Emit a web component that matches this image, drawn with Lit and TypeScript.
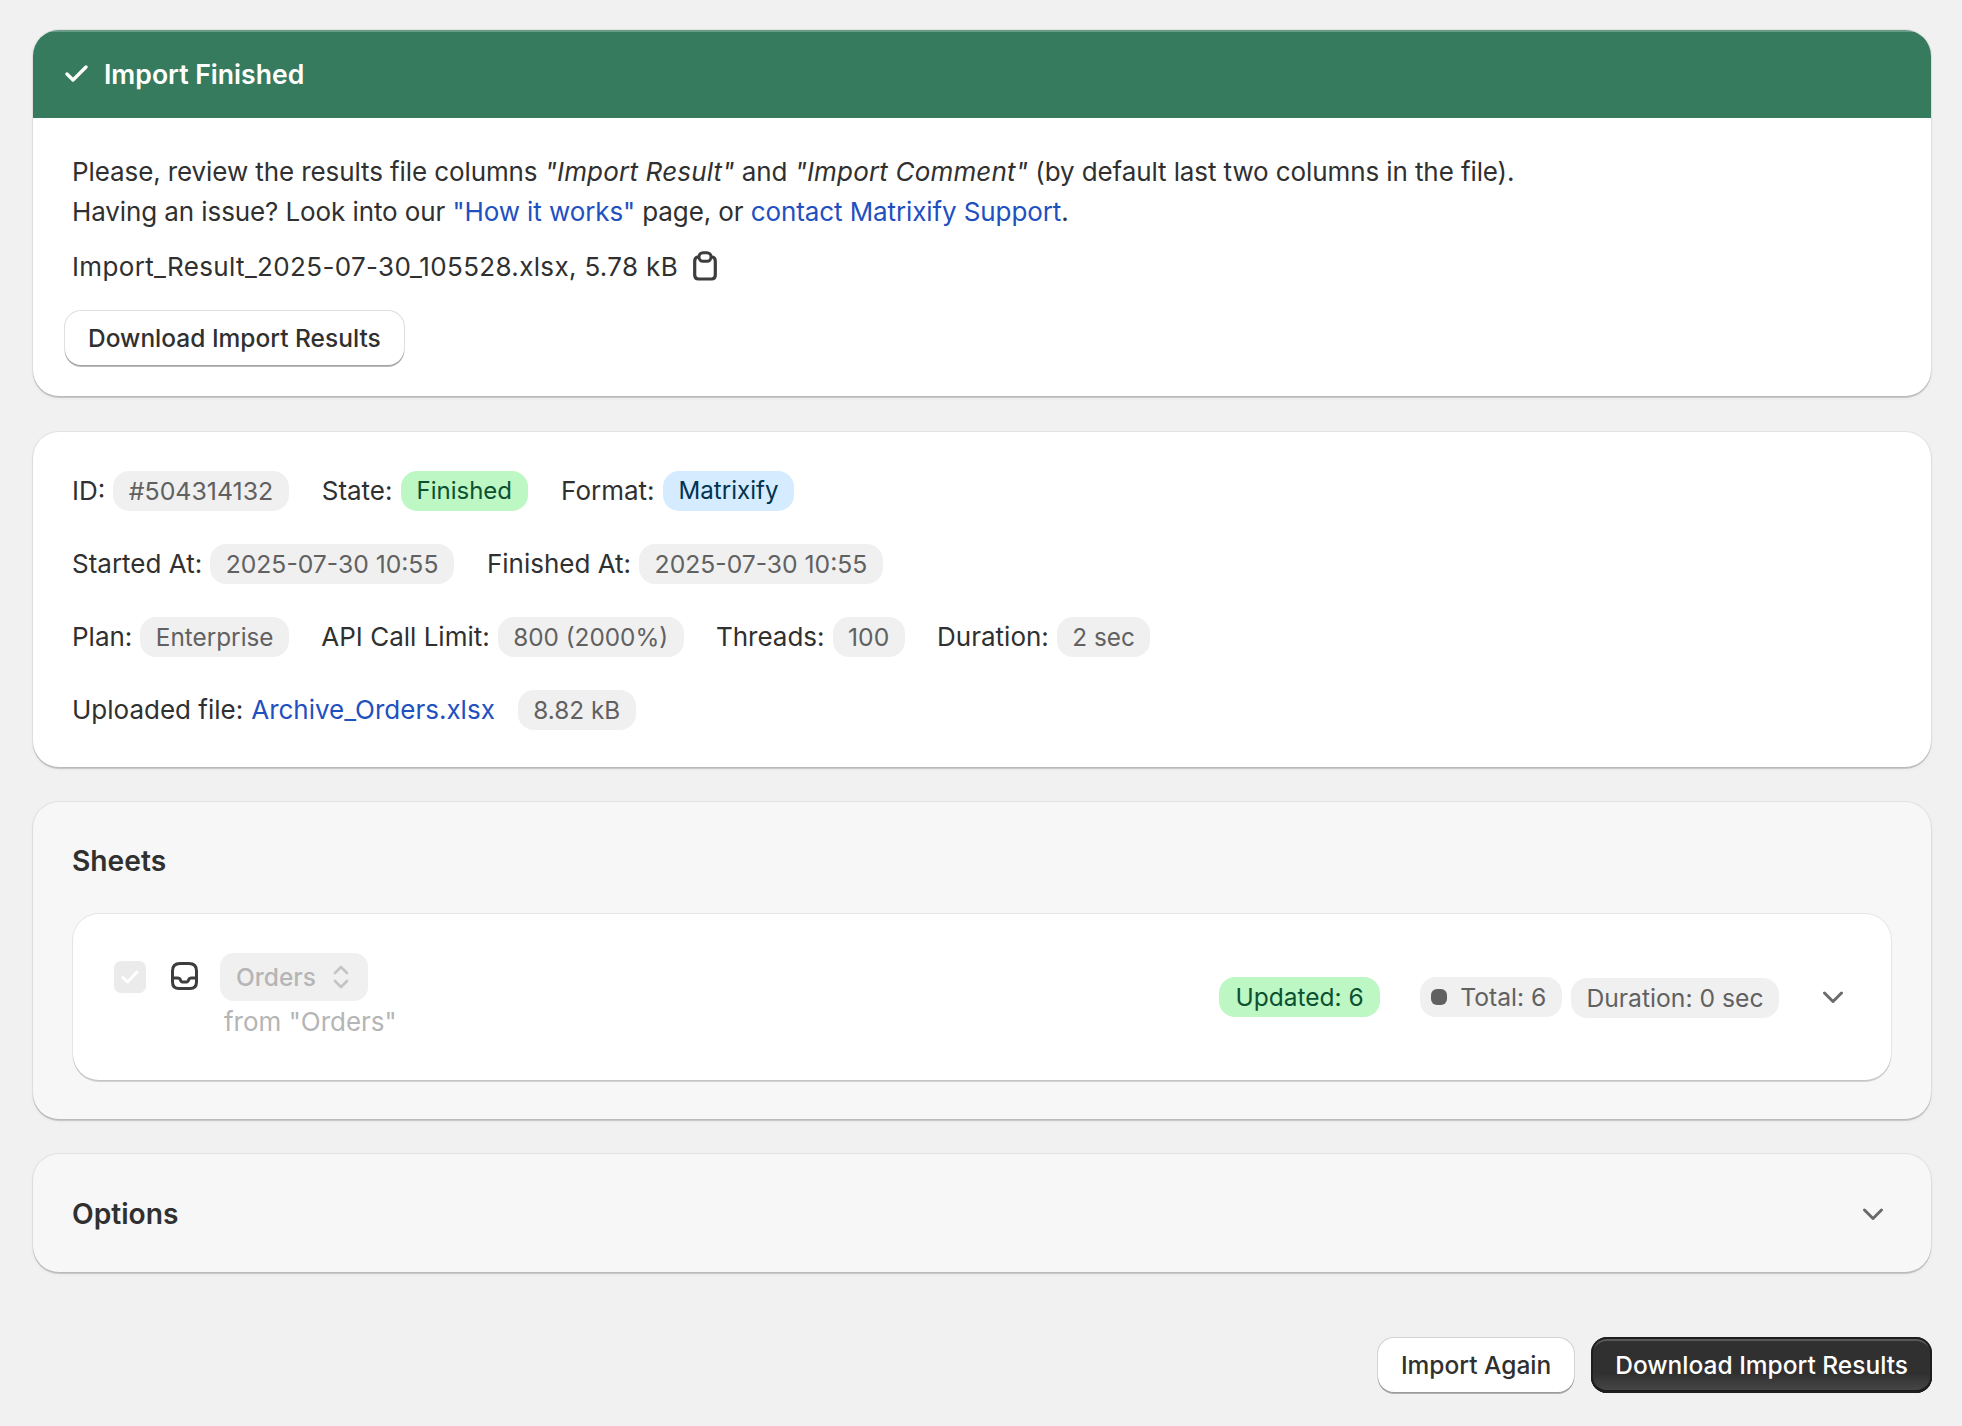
import { LitElement, html, css } from "lit";
import { customElement } from "lit/decorators.js";

const chevron = html`<svg class="chev" width="22" height="13" viewBox="0 0 22 13" fill="none"><path d="M2.5 2 L11 10.5 L19.5 2" stroke="#6b6b6b" stroke-width="3" stroke-linecap="round" stroke-linejoin="round"/></svg>`;

@customElement("app-root")
export class AppRoot extends LitElement {
  static styles = css`
    :host { display: block; box-sizing: border-box; min-height: 1426px; background: #f1f1f1; padding: 30px 31px 0 33px; font-family: Inter, "Liberation Sans", sans-serif; font-size: 26px; line-height: 40px; color: #303030; }
    * { box-sizing: border-box; }
    .stack { display: flex; flex-direction: column; gap: 35px; }
    .card { background: #fff; border-radius: 26px; box-shadow: 0 2px 0 rgba(26,26,26,.16), 0 0 0 1px rgba(26,26,26,.07), 0 2px 4px rgba(26,26,26,.05); overflow: hidden; }
    .card.muted { background: #f7f7f7; }
    .first { margin-bottom: 1px; }
    .head { height: 88px; background: #377b5f; color: #fff; display: flex; align-items: center; gap: 16px; padding: 0 32px; font-weight: 600; font-size: 26.6px; box-shadow: inset 0 2px 0 rgba(255,255,255,.25); }
    .head svg { margin-top: -2px; }
    .body { padding: 34px 40px 31px 39px; letter-spacing: -0.1px; }
    .body i { letter-spacing: .18px; }
    .file { display: flex; align-items: center; gap: 15px; margin-top: 15px; height: 40px; letter-spacing: .34px; }
    .file svg { margin-top: -3px; }
    .btn { display: inline-flex; align-items: center; justify-content: center; height: 54px; padding: 0 23px; border-radius: 16px; background: #fff; font: 500 24.5px Inter, "Liberation Sans", sans-serif; letter-spacing: 0; color: #303030; box-shadow: 0 2px 0 rgba(26,26,26,.3), 0 0 0 1px rgba(26,26,26,.14); }
    .btn.dark { background: linear-gradient(#303030 65%, #4a4a4a); color: #fff; height: 56px; padding: 0 24px; box-shadow: inset 0 0 0 2px #1e1e1e, inset 0 4px 0 rgba(255,255,255,.2), inset 0 -3px 0 #1a1a1a; }
    .dl { margin: 24px 0 0 -7px; display: flex; }
    a { color: #1f50c0; text-decoration: none; }
    .meta { padding: 39px 40px 37px 39px; display: flex; flex-direction: column; gap: 33px; }
    .row { display: flex; align-items: center; gap: 33px; height: 40px; }
    .row.tight { gap: 32.3px; }
    .f { display: flex; align-items: center; gap: 8px; }
    .pill { display: inline-flex; align-items: center; height: 40px; padding: 0 15.5px; border-radius: 16px; background: #f0f0f0; color: #616161; white-space: nowrap; font-size: 24.7px; }
    .pill.id { font-size: 24.9px; }
    .pill.word { font-size: 24.3px; }
    .pill.green { background: #bdf7c3; color: #0c5132; padding: 0 16px; font-size: 24px; }
    .pill.blue { background: #d5ebff; color: #00344f; padding: 0 16px; font-size: 24.1px; }
    .pill.green.wide { font-size: 24.5px; }
    .sec { padding: 39px 40px 39px; }
    h2 { margin: 0 0 0 -1px; font-size: 28.2px; font-weight: 600; line-height: 40px; }
    .opt h2 { margin-left: 0; }
    .inner { margin-top: 33px; height: 166px; background: #fff; border-radius: 26px; box-shadow: 0 2px 0 rgba(26,26,26,.16), 0 0 0 1px rgba(26,26,26,.08); padding: 39px 47px 0 41px; display: flex; align-items: flex-start; }
    .box { width: 32px; height: 32px; margin-top: 8px; border-radius: 7px; background: #ebebeb; display: flex; align-items: center; justify-content: center; }
    .tray { margin: 9px 22px 0 25px; display: block; }
    .names { display: flex; flex-direction: column; }
    .sel { display: inline-flex; align-items: center; gap: 17px; height: 48px; width: 148px; padding: 0 16px; border-radius: 14px; background: #f0f0f0; color: #b5b5b5; font-weight: 500; font-size: 24.5px; }
    .from { color: #b5b5b5; margin: 1px 0 0 4px; line-height: 40px; }
    .stats { margin-left: auto; display: flex; align-items: center; height: 40px; margin-top: 24px; }
    .dot { width: 16px; height: 16px; border-radius: 6px; background: #616161; margin-right: 13px; margin-left: -4px; }
    .opt { height: 118px; padding: 2px 47px 0 39px; display: flex; align-items: center; justify-content: space-between; }
    .foot { display: flex; justify-content: flex-end; align-items: center; gap: 17px; margin: 65px -1px 0 0; }
    .shift { margin-left: 40px; }
    .near { margin-left: 9px; position: relative; top: 1px; }
    .end { margin-left: 43px; display: flex; }
    .after { margin-left: 15px; }
  `;

  render() {
    return html`<div class="stack">
      <section class="card first">
        <div class="head">
          <svg width="23" height="17" viewBox="0 0 23 17" fill="none"><path d="M2 9 L8 15 L21 2" stroke="#fff" stroke-width="3.3" stroke-linecap="round" stroke-linejoin="round"/></svg>
          Import Finished
        </div>
        <div class="body">
          <div>Please, review the results file columns <i>"Import Result"</i> and <i>"Import Comment"</i> (by default last two columns in the file).</div>
          <div>Having an issue? Look into our <a>"How it works"</a> page, or <a>contact Matrixify Support</a>.</div>
          <div class="file">Import_Result_2025-07-30_105528.xlsx, 5.78 kB
            <svg width="24" height="30" viewBox="0 0 24 30" fill="none"><path d="M6 6 H5.5 Q1.7 6 1.7 10 V24 Q1.7 28 5.5 28 H18.5 Q22.3 28 22.3 24 V10 Q22.3 6 18.5 6 H18" stroke="#3d3d3d" stroke-width="3.2"/><rect x="6" y="1.7" width="12" height="8.6" rx="4" stroke="#3d3d3d" stroke-width="3"/></svg>
          </div>
          <div class="dl"><span class="btn">Download Import Results</span></div>
        </div>
      </section>

      <section class="card meta">
        <div class="row">
          <span class="f">ID: <span class="pill id">#504314132</span></span>
          <span class="f">State: <span class="pill green">Finished</span></span>
          <span class="f">Format: <span class="pill blue">Matrixify</span></span>
        </div>
        <div class="row">
          <span class="f">Started At: <span class="pill">2025-07-30 10:55</span></span>
          <span class="f">Finished At: <span class="pill">2025-07-30 10:55</span></span>
        </div>
        <div class="row tight">
          <span class="f">Plan: <span class="pill word">Enterprise</span></span>
          <span class="f">API Call Limit: <span class="pill word">800 (2000%)</span></span>
          <span class="f">Threads: <span class="pill">100</span></span>
          <span class="f">Duration: <span class="pill word">2 sec</span></span>
        </div>
        <div class="row">
          <span class="f">Uploaded file: <a>Archive_Orders.xlsx</a><span class="pill word after">8.82 kB</span></span>
        </div>
      </section>

      <section class="card muted sec">
        <h2>Sheets</h2>
        <div class="inner">
          <span class="box"><svg width="20" height="16" viewBox="0 0 20 16" fill="none"><path d="M3 8.5 L7.5 13 L17 3" stroke="#fff" stroke-width="3" stroke-linecap="round" stroke-linejoin="round"/></svg></span>
          <svg class="tray" width="27" height="28" viewBox="0 0 27 28" fill="none"><path d="M1.5 16 V9 Q1.5 1.5 9 1.5 H18 Q25.5 1.5 25.5 9 V20 Q25.5 26.5 19 26.5 H8 Q1.5 26.5 1.5 20 V16 H7 Q8.7 16 9.3 17.6 Q10 20 11.5 20 H15.5 Q17 20 17.7 17.6 Q18.3 16 20 16 H25.5" stroke="#3d3d3d" stroke-width="3" stroke-linejoin="round"/></svg>
          <div class="names">
            <span class="sel">Orders
              <svg width="16" height="26" viewBox="0 0 16 26" fill="none"><path d="M2 9 L8 3 L14 9 M2 17 L8 23 L14 17" stroke="#c4c4c4" stroke-width="2.6" stroke-linecap="round" stroke-linejoin="round"/></svg>
            </span>
            <span class="from">from "Orders"</span>
          </div>
          <div class="stats">
            <span class="pill green wide">Updated: 6</span>
            <span class="pill shift"><span class="dot"></span>Total: 6</span>
            <span class="pill near">Duration: 0 sec</span>
            <span class="end">${chevron}</span>
          </div>
        </div>
      </section>

      <section class="card muted opt">
        <h2>Options</h2>
        ${chevron}
      </section>
    </div>
    <div class="foot">
      <span class="btn">Import Again</span>
      <span class="btn dark">Download Import Results</span>
    </div>`;
  }
}
